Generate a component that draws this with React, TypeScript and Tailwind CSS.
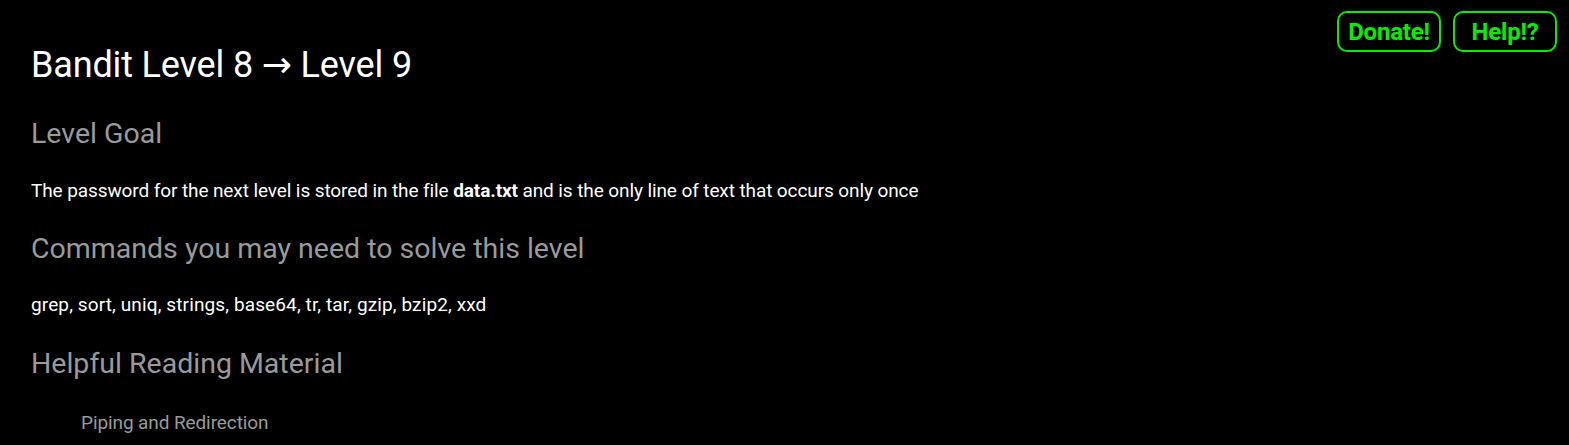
export default function App() {
  return (
    <div className="relative min-h-screen bg-black text-white font-['Roboto',sans-serif]">
      <div className="absolute right-3 top-[11px] flex gap-3">
        <a className="flex h-[41px] w-[104px] items-center justify-center rounded-[10px] border-2 border-[#00f000] text-[24px] font-bold tracking-[-0.2px] text-[#00f000]">
          Donate!
        </a>
        <a className="flex h-[41px] w-[104px] items-center justify-center rounded-[10px] border-2 border-[#00f000] text-[24px] font-bold tracking-[-0.2px] text-[#00f000]">
          Help!?
        </a>
      </div>

      <div className="px-[31px] pt-[43px]">
        <h1 className="text-[36px] leading-[44px] tracking-[-0.15px]">
          Bandit Level 8 <span className="font-['DejaVu_Sans',sans-serif]">→</span> Level 9
        </h1>

        <h2 className="mt-[27px] text-[28.5px] leading-[40px] text-[#9a9a9a]">Level Goal</h2>
        <p className="mt-[25px] text-[19px] leading-[24px] tracking-[-0.1px]">
          The password for the next level is stored in the file <b>data.txt</b> and is the only line of text that occurs only once
        </p>

        <h2 className="mt-[26px] text-[28.5px] leading-[40px] text-[#9a9a9a]">Commands you may need to solve this level</h2>
        <p className="mt-[24px] text-[19px] leading-[24px] tracking-[0.12px]">grep, sort, uniq, strings, base64, tr, tar, gzip, bzip2, xxd</p>

        <h2 className="mt-[27px] text-[28.5px] leading-[40px] text-[#9a9a9a]">Helpful Reading Material</h2>
        <ul className="mt-[27px] pl-[50px] text-[19px] leading-[24px] tracking-[-0.1px]">
          <li>
            <a className="text-[#9a9a9a]">Piping and Redirection</a>
          </li>
        </ul>
      </div>
    </div>
  );
}
